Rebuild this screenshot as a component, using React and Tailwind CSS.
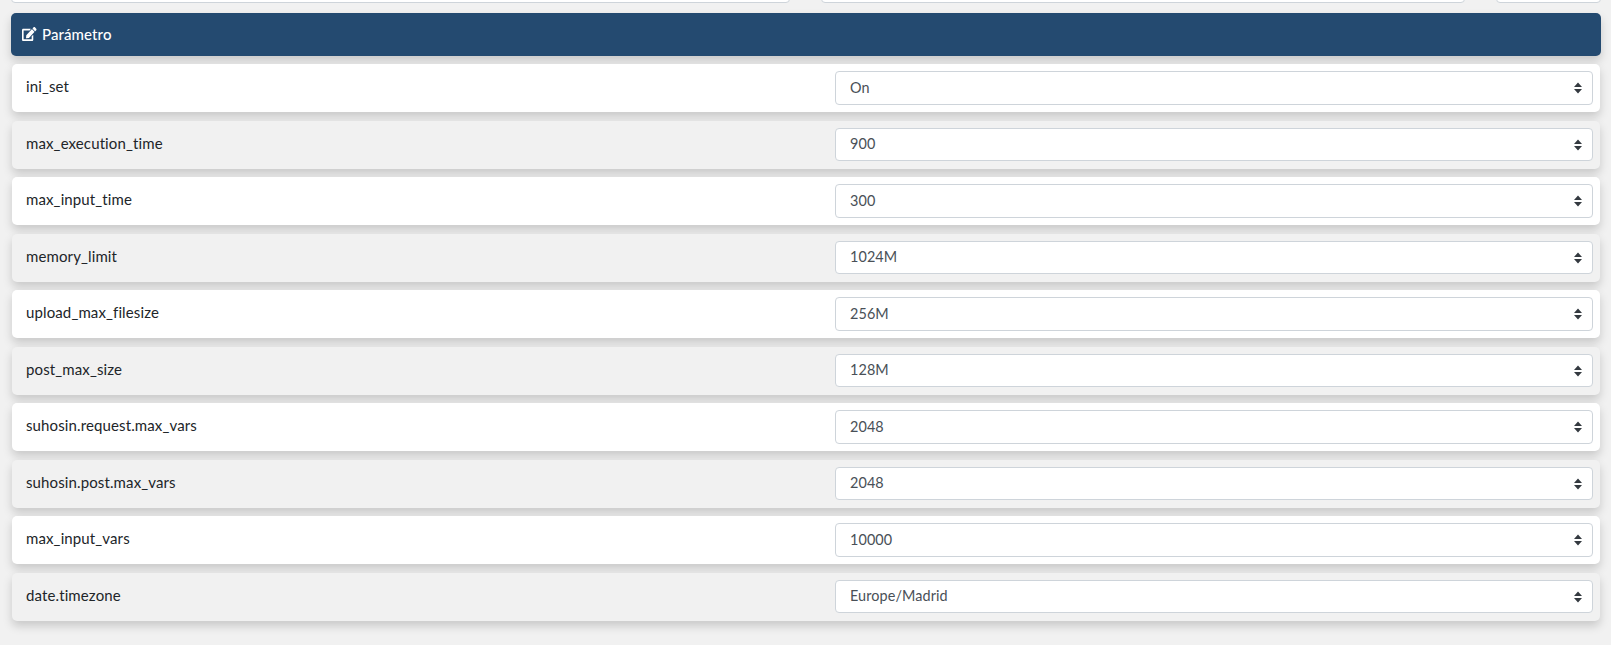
import React from "react";

const params = [
  { name: "ini_set", value: "On" },
  { name: "max_execution_time", value: "900" },
  { name: "max_input_time", value: "300" },
  { name: "memory_limit", value: "1024M" },
  { name: "upload_max_filesize", value: "256M" },
  { name: "post_max_size", value: "128M" },
  { name: "suhosin.request.max_vars", value: "2048" },
  { name: "suhosin.post.max_vars", value: "2048" },
  { name: "max_input_vars", value: "10000" },
  { name: "date.timezone", value: "Europe/Madrid" },
];

const EditIcon = () => (
  <svg viewBox="0 0 576 512" preserveAspectRatio="none" className="h-[14px] w-[14.5px] shrink-0 fill-white">
    <path d="M402.6 83.2l90.2 90.2c3.8 3.8 3.8 10 0 13.8L274.4 405.6l-92.8 10.3c-12.4 1.4-22.9-9.1-21.5-21.5l10.3-92.8L388.8 83.2c3.8-3.8 10-3.8 13.8 0zm162-22.9l-48.8-48.8c-15.2-15.2-39.9-15.2-55.2 0l-35.4 35.4c-3.8 3.8-3.8 10 0 13.8l90.2 90.2c3.8 3.8 10 3.8 13.8 0l35.4-35.4c15.2-15.3 15.2-40 0-55.2zM384 346.2V448H64V128h229.8c3.2 0 6.2-1.3 8.5-3.5l40-40c7.6-7.6 2.2-20.5-8.5-20.5H48C21.5 64 0 85.5 0 112v352c0 26.5 21.5 48 48 48h352c26.5 0 48-21.5 48-48V306.2c0-10.7-12.9-16-20.5-8.5l-40 40c-2.2 2.3-3.5 5.3-3.5 8.5z" />
  </svg>
);

const Row = ({ name, value, odd }) => {
  return (
    <div
      className={`mx-px mb-[8.5px] flex h-[48px] items-start justify-between rounded-[5px] pt-[7px] pl-[14px] pr-[7.5px] shadow-[0_5px_10px_rgba(0,0,0,0.17)] ${
        odd ? "bg-[#f1f1f1]" : "bg-white"
      }`}
    >
      <span className="text-[15px] leading-[31px] tracking-[0.12px] text-[#212529]">{name}</span>
      <div className="relative w-[757.5px]">
        <select
          defaultValue={value}
          className="block h-[33.5px] w-full appearance-none rounded border border-[#ced4da] bg-white pl-[14px] text-[14.4px] tracking-[0.1px] text-[#495057] outline-none"
        >
          <option>{value}</option>
        </select>
        <svg viewBox="0 0 10 12" className="absolute right-[10px] top-[11px] h-3 w-[10px] fill-[#343a40]">
          <path d="M5 0.5 9 5 1 5z M5 11.5 1 7 9 7z" />
        </svg>
      </div>
    </div>
  );
};

export default function App() {
  return (
    <div className="min-h-[645px] overflow-hidden bg-[#f1f1f1] pl-[11px] pr-[10px] font-['Lato','Open_Sans',sans-serif]">
      {/* bottom edge of the cards above */}
      <div className="-mt-[5px] mb-[10px] flex gap-[31px]">
        <div className="h-[8px] w-[779px] rounded border border-[#ced4da] bg-white" />
        <div className="h-[8px] w-[644px] rounded border border-[#ced4da] bg-white" />
        <div className="h-[8px] flex-1 rounded border border-[#ced4da] bg-white" />
      </div>

      <div className="mb-2 flex h-[43px] items-center gap-[5.5px] rounded-[5px] bg-[#244a70] pb-[1px] pl-[11px] text-[15px] font-medium tracking-[0.1px] text-white shadow-[0_5px_10px_rgba(0,0,0,0.17)]">
        <EditIcon />
        Parámetro
      </div>

      {params.map((p, i) => (
        <Row key={p.name} name={p.name} value={p.value} odd={i % 2 === 1} />
      ))}
    </div>
  );
}
